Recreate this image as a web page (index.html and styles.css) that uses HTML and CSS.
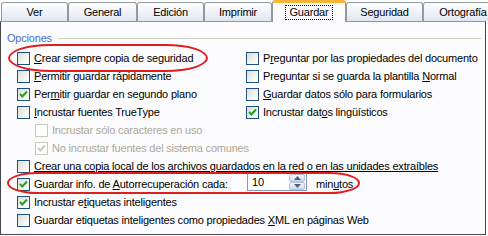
FILE: index.html
```html
<!DOCTYPE html>
<html lang="es">
<head>
<meta charset="utf-8">
<title>Opciones - Guardar</title>
<link rel="stylesheet" href="styles.css">
</head>
<body>
<div class="window">
  <div class="tabs">
    <div class="tab w-ver">Ver</div>
    <div class="tab w-gen">General</div>
    <div class="tab w-edi">Edición</div>
    <div class="tab w-imp">Imprimir</div>
    <div class="tab active w-gua"><span class="focus">Guardar</span></div>
    <div class="tab w-seg">Seguridad</div>
    <div class="tab w-ort">Ortografía</div>
  </div>
  <div class="panel">
    <div class="group-head"><span class="group-label">Opciones</span><span class="group-line"></span></div>
    <div class="grid2">
      <div class="opt"><span class="cb"></span><span><u>C</u>rear siempre copia de seguridad</span></div>
      <div class="opt"><span class="cb"></span><span>P<u>r</u>eguntar por las propiedades del documento</span></div>
      <div class="opt"><span class="cb"></span><span><u>P</u>ermitir guardar rápidamente</span></div>
      <div class="opt"><span class="cb"></span><span>Preguntar si se guarda la plantilla <u>N</u>ormal</span></div>
      <div class="opt"><span class="cb on"><svg viewBox="0 0 11 11" width="11" height="11"><polyline points="2,5 4.3,7.5 9,2.5" fill="none" stroke="#21a121" stroke-width="2"/></svg></span><span>Per<u>m</u>itir guardar en segundo plano</span></div>
      <div class="opt"><span class="cb"></span><span><u>G</u>uardar datos sólo para formularios</span></div>
      <div class="opt"><span class="cb"></span><span><u>I</u>ncrustar fuentes TrueType</span></div>
      <div class="opt"><span class="cb on"><svg viewBox="0 0 11 11" width="11" height="11"><polyline points="2,5 4.3,7.5 9,2.5" fill="none" stroke="#21a121" stroke-width="2"/></svg></span><span>Incrustar dat<u>o</u>s lingüísticos</span></div>
    </div>
    <div class="sub">
      <div class="opt disabled"><span class="cb"></span><span>Incrustar sólo caracteres en uso</span></div>
      <div class="opt disabled"><span class="cb"><svg viewBox="0 0 11 11" width="11" height="11"><polyline points="2,5 4.3,7.5 9,2.5" fill="none" stroke="#cac8bb" stroke-width="2"/></svg></span><span>No incrustar fuentes del sistema comunes</span></div>
    </div>
    <div class="opt"><span class="cb"></span><span class="ul">Crear una copia local de los archivos guardados en la red o en las unidades extraíbles</span></div>
    <div class="opt autosave">
      <div class="opt-inline"><span class="cb on"><svg viewBox="0 0 11 11" width="11" height="11"><polyline points="2,5 4.3,7.5 9,2.5" fill="none" stroke="#21a121" stroke-width="2"/></svg></span><span>Guardar info. de <u>A</u>utorrecuperación cada:</span></div>
      <div class="spin">
        <span class="spin-val">10</span>
        <span class="spin-btns">
          <span class="spin-btn"><svg viewBox="0 0 7 4" width="7" height="4"><polygon points="0,4 3.5,0 7,4" fill="#4d6185"/></svg></span>
          <span class="spin-btn"><svg viewBox="0 0 7 4" width="7" height="4"><polygon points="0,0 7,0 3.5,4" fill="#4d6185"/></svg></span>
        </span>
      </div>
      <span class="unit">min<u>u</u>tos</span>
    </div>
    <div class="opt"><span class="cb on"><svg viewBox="0 0 11 11" width="11" height="11"><polyline points="2,5 4.3,7.5 9,2.5" fill="none" stroke="#21a121" stroke-width="2"/></svg></span><span>Incrustar e<u>t</u>iquetas inteligentes</span></div>
    <div class="opt"><span class="cb"></span><span>Guardar etiquetas inteligentes como propiedades <u>X</u>ML en páginas Web</span></div>
  </div>
  <div class="ring ring1"></div>
  <div class="ring ring2"></div>
</div>
</body>
</html>
```
FILE: styles.css
```css
* { box-sizing: border-box; }
html, body { margin: 0; padding: 0; background: #ffffff; }
body {
  font-family: "Liberation Sans", Arial, sans-serif;
  font-size: 11px;
  letter-spacing: -0.2px;
  color: #000;
}
.window {
  position: relative;
  width: 488px;
  height: 236px;
  overflow: hidden;
}
.tabs {
  display: flex;
  align-items: flex-end;
  height: 21px;
  padding-left: 1px;
  position: relative;
  z-index: 2;
}
.tab {
  height: 19px;
  border: 1px solid #919b9c;
  border-bottom: none;
  border-radius: 3px 3px 0 0;
  background: linear-gradient(#fefefe, #f1f4fa 45%, #dfe6f1);
  text-align: center;
  line-height: 18px;
  flex: none;
}
.w-ver { width: 67px; }
.w-gen { width: 69px; }
.w-edi { width: 67px; }
.w-imp { width: 68px; }
.w-gua { width: 74px; }
.w-seg { width: 77px; }
.w-ort { width: 80px; }
.tab.active {
  height: 22px;
  margin-bottom: -1px;
  background: #fcfcfe;
  border-top: 3px solid #f7b53a;
  line-height: 16px;
  padding-top: 1px;
}
.focus {
  display: inline-block;
  outline: 1px dotted #000;
  padding: 0 4px;
  line-height: 13px;
}
.panel {
  width: 486px;
  height: 214px;
  border: 1px solid #44494b;
  border-top-color: #919b9c;
  background: #fcfcfe;
  padding: 0 0 0 16px;
}
.group-head {
  display: flex;
  align-items: center;
  height: 13px;
  margin: 10px 4px 4px -10px;
}
.group-label {
  color: #4a6fcf;
  line-height: 13px;
}
.group-line {
  flex: 1;
  height: 1px;
  margin-left: 6px;
  background: #d0d0bf;
}
.grid2 {
  display: grid;
  grid-template-columns: 229px 1fr;
}
.opt {
  display: flex;
  align-items: center;
  height: 18px;
  white-space: nowrap;
}
.opt-inline {
  display: flex;
  align-items: center;
  width: 230px;
}
.cb {
  flex: none;
  width: 13px;
  height: 13px;
  margin-right: 4px;
  border: 1px solid #1c5180;
  background: linear-gradient(135deg, #dcdcd7, #f4f4f0 60%, #ffffff);
  display: flex;
  align-items: center;
  justify-content: center;
}
.cb.on { background: linear-gradient(135deg, #dcdcd7, #f4f4f0 60%, #ffffff); }
.cb svg { display: block; }
.sub { padding-left: 18px; }
.disabled { color: #aca899; }
.disabled .cb { border-color: #cac8bb; background: #ffffff; }
.ul { text-decoration: underline; }
.spin {
  flex: none;
  width: 60px;
  height: 18px;
  margin-top: -4px;
  border: 1px solid #7f9db9;
  background: #fff;
  display: flex;
  align-items: center;
  padding: 0 1px 0 4px;
}
.spin-val { flex: 1; }
.spin-btns {
  display: flex;
  flex-direction: column;
  gap: 0;
  width: 16px;
  height: 16px;
}
.spin-btn {
  flex: 1;
  border: 1px solid #b6c3d9;
  border-radius: 2px;
  background: linear-gradient(#f4f7fd, #cfd9ea);
  display: flex;
  align-items: center;
  justify-content: center;
}
.spin-btn svg { display: block; }
.unit { margin-left: 9px; }
.ring {
  position: absolute;
  border: 2px solid #e11d1d;
  pointer-events: none;
  z-index: 3;
}
.ring1 { left: 8px; top: 44px; width: 200px; height: 28px; border-radius: 42px / 14px; }
.ring2 { left: 7px; top: 172px; width: 353px; height: 22px; border-radius: 30px / 11px; }
```
